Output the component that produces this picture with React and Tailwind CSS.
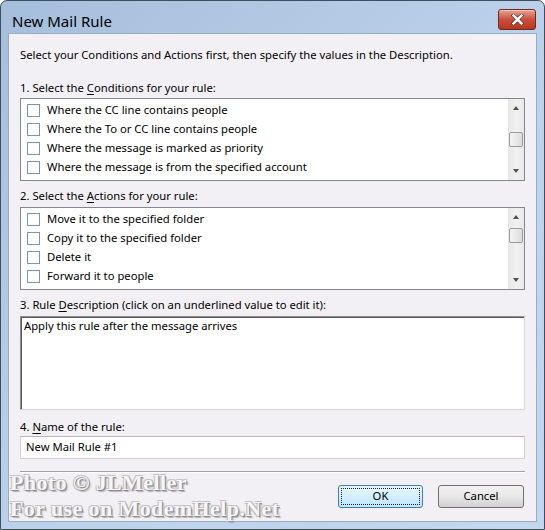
import React from "react"

const conditions = [
  "Where the CC line contains people",
  "Where the To or CC line contains people",
  "Where the message is marked as priority",
  "Where the message is from the specified account",
]

const actions = [
  "Move it to the specified folder",
  "Copy it to the specified folder",
  "Delete it",
  "Forward it to people",
]

const font = { fontFamily: '"Noto Sans", "Open Sans", sans-serif' }

function Scrollbar({ thumbTop }) {
  return (
    <div className="flex h-full w-[16px] flex-col items-center bg-gradient-to-r from-[#e6e6e6] via-[#f1f1f1] to-[#e9e9e9]">
      <div className="flex h-[18px] w-full items-center justify-center">
        <div className="h-0 w-0 border-x-[3px] border-b-[4px] border-x-transparent border-b-[#505050]" />
      </div>
      <div className="w-full flex-1 px-[1px]">
        <div style={{ height: thumbTop }} />
        <div className="h-[15px] w-full rounded-[2px] border border-[#9a9a9a] bg-gradient-to-r from-[#f4f4f4] to-[#dcdcdc]" />
      </div>
      <div className="flex h-[18px] w-full items-center justify-center">
        <div className="h-0 w-0 border-x-[3px] border-t-[4px] border-x-transparent border-t-[#505050]" />
      </div>
    </div>
  )
}

function CheckList({ items, thumbTop }) {
  return (
    <div className="flex h-[83px] border border-[#828790] bg-white">
      <div className="flex-1 pt-[2px] pl-[6px]">
        {items.map((item) => (
          <div key={item} className="flex h-[19px] items-center">
            <div className="h-[13px] w-[13px] border border-[#7a97a4] bg-white" />
            <span className="ml-[7px] text-[11.25px] text-black">{item}</span>
          </div>
        ))}
      </div>
      <Scrollbar thumbTop={thumbTop} />
    </div>
  )
}

function Label({ pre, u, post, className }) {
  return (
    <div className={`h-[16px] text-[11.25px] leading-[16px] text-black ${className}`}>
      {pre}
      <span className="underline underline-offset-2">{u}</span>
      {post}
    </div>
  )
}

export default function App() {
  return (
    <div
      className="relative flex h-[530px] w-[545px] flex-col overflow-hidden rounded-t-[7px] border border-[#3f4d5c] bg-gradient-to-br from-[#a5bedb] via-[#bbd1ea] to-[#c3d7ee]"
      style={font}
    >
      {/* title bar */}
      <div className="flex h-[32px] items-start justify-between pl-[11px] pr-[8px]">
        <span className="mt-[10px] text-[15px] leading-[20px] text-black">New Mail Rule</span>
        <div className="mt-[8px] flex h-[21px] w-[38px] items-center justify-center rounded-[3px] border border-[#6a2a22] bg-gradient-to-b from-[#e8a093] via-[#cc4f3c] to-[#b7361f] shadow-[inset_0_1px_0_#f3c6bd]">
          <svg width="13" height="11" viewBox="0 0 13 11">
            <path d="M2.5 1.5 L10.5 9.5 M10.5 1.5 L2.5 9.5" stroke="#5a1f16" strokeWidth="3.8" strokeLinecap="square" />
            <path d="M2.5 1.5 L10.5 9.5 M10.5 1.5 L2.5 9.5" stroke="#ffffff" strokeWidth="2.5" strokeLinecap="square" />
          </svg>
        </div>
      </div>

      {/* content */}
      <div className="mx-[7px] flex h-[489px] flex-col border border-[#98acc4] bg-[#f3f0f5] px-[11px]">
        <div className="mt-[13px] h-[16px] text-[11.25px] leading-[16px] text-black">
          Select your Conditions and Actions first, then specify the values in the Description.
        </div>

        <Label className="mt-[17px]" pre="1. Select the " u="C" post="onditions for your rule:" />
        <div className="mt-[2px]">
          <CheckList items={conditions} thumbTop={15} />
        </div>

        <Label className="mt-[7px]" pre="2. Select the " u="A" post="ctions for your rule:" />
        <div className="mt-[3px]">
          <CheckList items={actions} thumbTop={2} />
        </div>

        <Label className="mt-[7px]" pre="3. Rule " u="D" post="escription (click on an underlined value to edit it):" />
        <div className="mt-[3px] h-[94px] border border-[#8c8c8c] border-r-[#d8d8d8] border-b-[#d8d8d8] bg-white shadow-[inset_1px_1px_0_#5a5a5a]">
          <div className="pl-[3px] pt-[1px] text-[11.25px] leading-[16px] text-black">
            Apply this rule after the message arrives
          </div>
        </div>

        <Label className="mt-[9px]" pre="4. " u="N" post="ame of the rule:" />
        <div className="mt-[1px] flex h-[23px] items-center border border-[#d2d2d2] border-t-[#b5b5b5] bg-white pl-[5px] text-[11.25px] text-black">
          New Mail Rule #1
        </div>

        <div className="mt-[12px] h-px bg-[#a0a0a0] shadow-[0_1px_0_#ffffff]" />

        <div className="mt-[13px] mr-[1px] flex justify-end gap-[15px]">
          <div className="flex h-[23px] w-[85px] items-center justify-center rounded-[3px] border border-[#3c7fb1] bg-gradient-to-b from-[#e8f6fd] to-[#bee6fd] p-[2px]">
            <div className="flex h-full w-full items-center justify-center border border-dotted border-[#222]">
              <span className="text-[11.25px] text-black">OK</span>
            </div>
          </div>
          <div className="flex h-[23px] w-[86px] items-center justify-center rounded-[3px] border border-[#707070] bg-gradient-to-b from-[#f2f2f2] via-[#e8e8e8] to-[#d0d0d0]">
            <span className="text-[11.25px] text-black">Cancel</span>
          </div>
        </div>
      </div>

      {/* watermark */}
      <div
        className="pointer-events-none absolute left-[9px] top-[469px] text-[22px] font-bold leading-[26px] tracking-[0.4px] text-[#f7f5f9] [text-shadow:1px_1px_0_#8e8e8e,-1px_-1px_0_#c4c4c4,1px_-1px_0_#c4c4c4,-1px_1px_0_#c4c4c4,2px_2px_1px_#b0b0b0]"
        style={{ fontFamily: '"Liberation Serif", serif' }}
      >
        <div>Photo © JLMeller</div>
        <div>For use on ModemHelp.Net</div>
      </div>
    </div>
  )
}
